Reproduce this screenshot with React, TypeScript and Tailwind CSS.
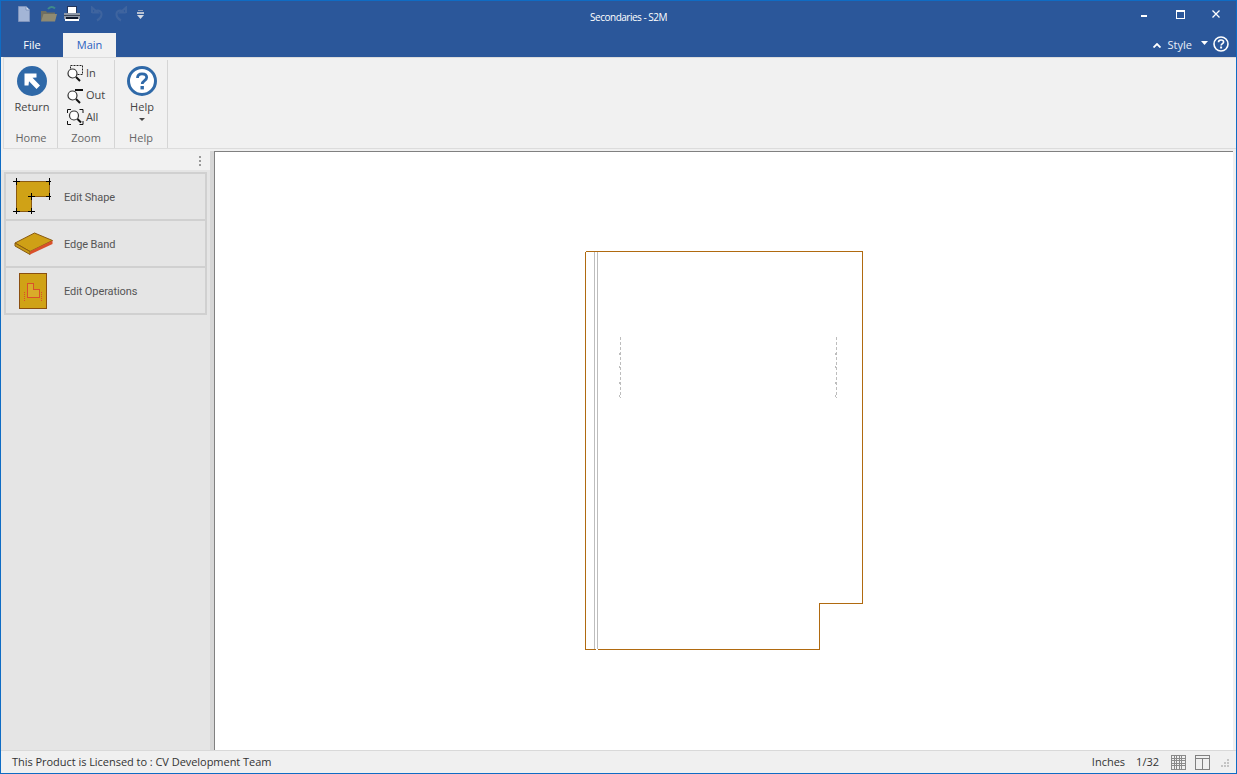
import React from "react";

const FONT = "font-['Open_Sans','Noto_Sans',sans-serif]";

const FileIcon = () => (
  <svg width="12" height="16" viewBox="0 0 12 16" className="block">
    <path d="M0.5 0.5H8L11.5 4V15.5H0.5Z" fill="#a3b5d6" stroke="#7e93bc" />
    <path d="M8 0.5V4H11.5" fill="#dfe6f2" stroke="#7e93bc" />
  </svg>
);

const FolderIcon = () => (
  <svg width="17" height="16" viewBox="0 0 17 16" className="block">
    <path d="M8 3C10 0.5 13 0.5 15 2.5" fill="none" stroke="#3f8a8a" strokeWidth="2" />
    <path d="M1 5H6L7 6.5H15V15H1Z" fill="#6f6f62" />
    <path d="M3.5 8H17L15 15.5H1Z" fill="#8f8a72" />
  </svg>
);

const PrintIcon = () => (
  <svg width="16" height="16" viewBox="0 0 16 16" className="block">
    <rect x="3.5" y="0.5" width="9" height="7" fill="#fff" stroke="#22345a" />
    <rect x="0" y="7" width="16" height="6" fill="#8e98a8" />
    <rect x="0" y="9" width="16" height="1" fill="#3d4656" />
    <rect x="2" y="11" width="12" height="2" fill="#0f1a2e" />
    <rect x="1" y="13" width="14" height="2" fill="#fff" />
  </svg>
);

const UndoIcon = ({ flip = false }: { flip?: boolean }) => (
  <svg width="14" height="16" viewBox="0 0 14 16" className={flip ? "block -scale-x-100" : "block"}>
    <path d="M2 7V1.5L7.5 6.5H4C7 2.5 12 5 11.5 9C11 12 9 13.5 7 14.5" fill="none" stroke="#3e649f" strokeWidth="2" />
  </svg>
);

const QuickCustomize = () => (
  <svg width="7" height="9" viewBox="0 0 7 9" className="block">
    <rect x="1" y="0" width="5" height="1" fill="#8f9db8" />
    <rect x="0" y="2" width="7" height="2" fill="#b9c2d2" />
    <path d="M0 5H7L3.5 9Z" fill="#d5dae4" />
  </svg>
);

const ReturnIcon = () => (
  <svg width="30" height="30" viewBox="0 0 30 30" className="block">
    <circle cx="15" cy="15" r="15" fill="#2f69a8" />
    <path d="M7.5 7.5H19.5V11.5L15.5 11.8L23 19.5L19.5 23L12 15.3L11.5 19.5H7.5Z" fill="#fff" />
  </svg>
);

const HelpIcon = () => (
  <svg width="30" height="30" viewBox="0 0 30 30" className="block">
    <circle cx="15" cy="15" r="13.5" fill="#fff" stroke="#2f69a8" strokeWidth="3" />
    <path d="M10.5 12C10.5 9 12.5 7.8 15 7.8C17.8 7.8 19.7 9.3 19.7 11.6C19.7 14.5 15.2 14.8 15.2 18" fill="none" stroke="#2f69a8" strokeWidth="2.8" />
    <rect x="13.5" y="20" width="3.4" height="3.4" fill="#2f69a8" />
  </svg>
);

const Lens = () => (
  <>
    <circle cx="5.5" cy="8.5" r="4.5" fill="#fff" stroke="#333" strokeWidth="1.2" />
    <path d="M9 12L13 16" stroke="#111" strokeWidth="2" />
  </>
);

const ZoomInIcon = () => (
  <svg width="17" height="17" viewBox="0 0 17 17" className="block">
    <rect x="3.5" y="0.5" width="12" height="9" fill="none" stroke="#222" strokeDasharray="2 1" />
    <Lens />
  </svg>
);

const ZoomOutIcon = () => (
  <svg width="17" height="17" viewBox="0 0 17 17" className="block">
    <rect x="8" y="2" width="8" height="2" fill="#111" />
    <Lens />
  </svg>
);

const ZoomAllIcon = () => (
  <svg width="17" height="17" viewBox="0 0 17 17" className="block">
    <path d="M0.5 4V0.5H4M12.5 0.5H16V4M16 12V15.5H12.5M4 15.5H0.5V12" fill="none" stroke="#111" />
    <circle cx="7" cy="6.5" r="4.5" fill="#fff" stroke="#333" strokeWidth="1.2" />
    <path d="M10.5 10L14 13.5" stroke="#111" strokeWidth="2" />
  </svg>
);

const Tick = ({ x, y }: { x: number; y: number }) => (
  <path d={`M${x - 3} ${y + 0.5}H${x + 4}M${x + 0.5} ${y - 3}V${y + 4}`} stroke="#000" fill="none" />
);

const EditShapeIcon = () => (
  <svg width="38" height="36" viewBox="0 0 38 36" className="mb-[1px] mr-[4px] block" shapeRendering="crispEdges">
    <path d="M3.5 3.5H36.5V18.5H18.5V33.5H3.5Z" fill="#d0a216" stroke="#8a5a10" />
    <Tick x={3} y={3} />
    <Tick x={36} y={3} />
    <Tick x={36} y={18} />
    <Tick x={18} y={18} />
    <Tick x={3} y={33} />
    <Tick x={18} y={33} />
  </svg>
);

const EdgeBandIcon = () => (
  <svg width="40" height="24" viewBox="0 0 40 24" className="mt-[1px] block">
    <path d="M1 11L20.5 1L38.5 8.5L16 19.5Z" fill="#cfa016" stroke="#8a5a10" />
    <path d="M1 11V14L16 22.5V19.5Z" fill="#c79a14" stroke="#8a5a10" />
    <path d="M16 19.5L38.5 8.5V12L16 22.5Z" fill="#d9502a" />
  </svg>
);

const EditOperationsIcon = () => (
  <svg width="28" height="36" viewBox="0 0 28 36" className="mr-[2px] block" shapeRendering="crispEdges">
    <rect x="0.5" y="0.5" width="27" height="35" fill="#d0a216" stroke="#8a4f10" />
    <path d="M8.5 10.5H14.5V16.5H20.5V24.5H8.5Z" fill="#d9ab2a" stroke="#d9502a" />
    <path d="M5.5 19V28M22.5 19V28" stroke="#d9502a" strokeDasharray="1 1" />
  </svg>
);

const GridIcon = () => (
  <svg width="15" height="15" viewBox="0 0 15 15" className="block" shapeRendering="crispEdges">
    <path d="M0 0.5H15M0 3.5H15M0 5.5H15M0 8.5H15M0 10.5H15M0 14.5H15M0.5 0V15M3.5 0V15M5.5 0V15M8.5 0V15M10.5 0V15M14.5 0V15" stroke="#8a8a8a" />
  </svg>
);

const PanesIcon = () => (
  <svg width="15" height="15" viewBox="0 0 15 15" className="block" shapeRendering="crispEdges">
    <rect x="0.5" y="0.5" width="14" height="14" fill="none" stroke="#808080" />
    <path d="M0 3.5H15M7.5 3V15" stroke="#808080" />
  </svg>
);

const ZoomButton = ({ icon, label }: { icon: React.ReactNode; label: string }) => (
  <div className="flex h-[22px] items-center gap-[2px]">
    {icon}
    <span className="text-[11px] text-[#444]">{label}</span>
  </div>
);

const RibbonGroup = ({ label, width, children }: { label: string; width: string; children: React.ReactNode }) => (
  <div className={`flex h-full ${width} flex-col items-center border-r border-[#d5d5d5]`}>
    <div className="flex flex-1 flex-col items-center">{children}</div>
    <span className="mb-[3px] text-[11px] leading-[15px] text-[#666]">{label}</span>
  </div>
);

const SidePanelItem = ({ icon, label }: { icon: React.ReactNode; label: string }) => (
  <div className="flex h-[47px] items-center border-2 border-b-0 border-[#d0d0d0] bg-[#e5e5e5] last:h-[49px] last:border-b-2">
    <div className="flex w-[56px] shrink-0 justify-center">{icon}</div>
    <span className="mt-[4px] pl-[2px] font-['Roboto',sans-serif] text-[11px] tracking-[-0.1px] text-[#555]">{label}</span>
  </div>
);

export default function App() {
  return (
    <div className={`flex h-screen w-full flex-col overflow-hidden border border-[#0f6cc4] bg-[#f0f0f0] ${FONT}`}>
      {/* title bar */}
      <div className="relative flex h-[32px] shrink-0 items-center bg-[#2b579a] pb-[6px]">
        <div className="flex items-center pl-[17px]">
          <FileIcon />
          <div className="ml-[10px]"><FolderIcon /></div>
          <div className="ml-[7px]"><PrintIcon /></div>
          <div className="ml-[10px]"><UndoIcon /></div>
          <div className="ml-[10px]"><UndoIcon flip /></div>
          <div className="ml-[9px]"><QuickCustomize /></div>
        </div>
        <span className="absolute inset-x-0 top-[9px] pl-[20px] text-center text-[10px] leading-[15px] tracking-[-0.5px] text-white">Secondaries - S2M</span>
        <div className="ml-auto flex items-center">
          <svg width="6" height="2" className="mr-[29px] mt-[4px]"><rect width="6" height="2" fill="#fff" /></svg>
          <svg width="9" height="9" className="mr-[27px]"><rect x="0.5" y="0.5" width="8" height="8" fill="none" stroke="#fff" /><rect width="9" height="2" fill="#fff" /></svg>
          <svg width="8" height="8" viewBox="0 0 8 8" className="mr-[16px]"><path d="M0.5 0.5L7.5 7.5M7.5 0.5L0.5 7.5" stroke="#fff" strokeWidth="1.3" /></svg>
        </div>
      </div>

      {/* tabs */}
      <div className="flex h-[24px] shrink-0 items-end bg-[#2b579a]">
        <div className="flex h-[24px] w-[62px] items-center justify-center text-[11px] text-white">File</div>
        <div className="flex h-[24px] w-[53px] items-center justify-center bg-[#f1f1f1] text-[11px] text-[#2b5fc0]">Main</div>
        <div className="mb-[5px] ml-auto flex items-center text-[11px] text-[#e8eef8]">
          <svg width="8" height="5" viewBox="0 0 8 5" className="mr-[7px] mt-[2px]"><path d="M0.5 4.5L4 1L7.5 4.5" fill="none" stroke="#fff" strokeWidth="1.8" /></svg>
          <span className="mt-[2px] leading-[14px]">Style</span>
          <svg width="7" height="4" viewBox="0 0 7 4" className="mb-[3px] ml-[9px]"><path d="M0 0H7L3.5 4Z" fill="#fff" /></svg>
          <svg width="16" height="16" viewBox="0 0 16 16" className="ml-[5px] mr-[7px]">
            <circle cx="8" cy="8" r="7" fill="none" stroke="#fff" strokeWidth="1.6" />
            <path d="M5.5 6.3C5.5 4.6 6.6 4 8 4C9.5 4 10.6 4.8 10.6 6C10.6 7.6 8.1 7.7 8.1 9.5" fill="none" stroke="#fff" strokeWidth="1.6" />
            <rect x="7.1" y="10.5" width="2" height="2" fill="#fff" />
          </svg>
        </div>
      </div>

      {/* ribbon */}
      <div className="ml-[2px] flex h-[92px] shrink-0 border-b border-l border-t border-[#dcdcdc] bg-[#f1f1f1] pl-[1px] pt-[2px]">
        <RibbonGroup label="Home" width="w-[53px]">
          <div className="ml-[2px] mt-[6px]"><ReturnIcon /></div>
          <span className="ml-[2px] mt-[3px] text-[11px] leading-[15px] text-[#444]">Return</span>
        </RibbonGroup>
        <RibbonGroup label="Zoom" width="w-[57px]">
          <div className="mt-[2px] flex flex-col items-start">
            <ZoomButton icon={<ZoomInIcon />} label="In" />
            <ZoomButton icon={<ZoomOutIcon />} label="Out" />
            <ZoomButton icon={<ZoomAllIcon />} label="All" />
          </div>
        </RibbonGroup>
        <RibbonGroup label="Help" width="w-[53px]">
          <div className="ml-[2px] mt-[6px]"><HelpIcon /></div>
          <span className="ml-[2px] mt-[3px] text-[11px] leading-[15px] text-[#444]">Help</span>
          <svg width="6" height="3" viewBox="0 0 6 3" className="ml-[2px] mt-[4px]"><path d="M0 0H6L3 3Z" fill="#444" /></svg>
        </RibbonGroup>
      </div>

      {/* workspace */}
      <div className="flex min-h-0 flex-1 pt-[2px]">
        <div className="flex w-[209px] shrink-0 flex-col bg-[#e5e5e5]">
          <div className="flex h-[19px] shrink-0 items-center justify-end bg-[#f1f1f1] pr-[9px]">
            <div className="flex flex-col gap-[2px]">
              <span className="block h-[2px] w-[2px] bg-[#999]" />
              <span className="block h-[2px] w-[2px] bg-[#999]" />
              <span className="block h-[2px] w-[2px] bg-[#999]" />
            </div>
          </div>
          <div className="ml-[3px] mr-[3px] mt-[2px] flex flex-col">
            <SidePanelItem icon={<EditShapeIcon />} label="Edit Shape" />
            <SidePanelItem icon={<EdgeBandIcon />} label="Edge Band" />
            <SidePanelItem icon={<EditOperationsIcon />} label="Edit Operations" />
          </div>
        </div>
        <div className="w-[4px] shrink-0 bg-[#d6d6d6]" />
        <div className="min-w-0 flex-1 border-l border-t border-[#808080] bg-white">
          <svg width="1018" height="597" viewBox="215 152 1018 597" className="block" shapeRendering="crispEdges">
            <path d="M585.5 251.5H862.5V603.5H819.5V649.5H597.5M595.5 649.5H585.5V251.5" fill="none" stroke="#b06a10" />
            <path d="M594.5 252V649M597.5 252V649" stroke="#bdbdbd" />
            <path d="M620.5 337V398M836.5 337V398" stroke="#bdbdbd" strokeDasharray="3 2" />
            <path d="M619 353h1v2h-1zM619 366h1v2h-1zM619 382h1v2h-1zM619 395h1v2h-1zM835 353h1v2h-1zM835 366h1v2h-1zM835 382h1v2h-1zM835 395h1v2h-1z" fill="#bdbdbd" />
          </svg>
        </div>
        <div className="w-[3px] shrink-0 bg-[#f0f0f0]" />
      </div>

      {/* status bar */}
      <div className="flex h-[23px] shrink-0 items-center border-t border-[#d9d9d9] bg-[#f0f0f0] pl-[11px] text-[11px] text-[#333]">
        <span className="tracking-[-0.04px]">This Product is Licensed to : CV Development Team</span>
        <div className="ml-auto flex items-center">
          <span>Inches</span>
          <span className="ml-[11px]">1/32</span>
          <div className="ml-[12px]"><GridIcon /></div>
          <div className="ml-[9px]"><PanesIcon /></div>
          <svg width="9" height="9" viewBox="0 0 9 9" className="ml-[10px] mr-[7px]">
            <path d="M7 1h2v2h-2zM4 4h2v2h-2zM7 4h2v2h-2zM1 7h2v2h-2zM4 7h2v2h-2zM7 7h2v2h-2z" fill="#c4c4c4" />
          </svg>
        </div>
      </div>
    </div>
  );
}
